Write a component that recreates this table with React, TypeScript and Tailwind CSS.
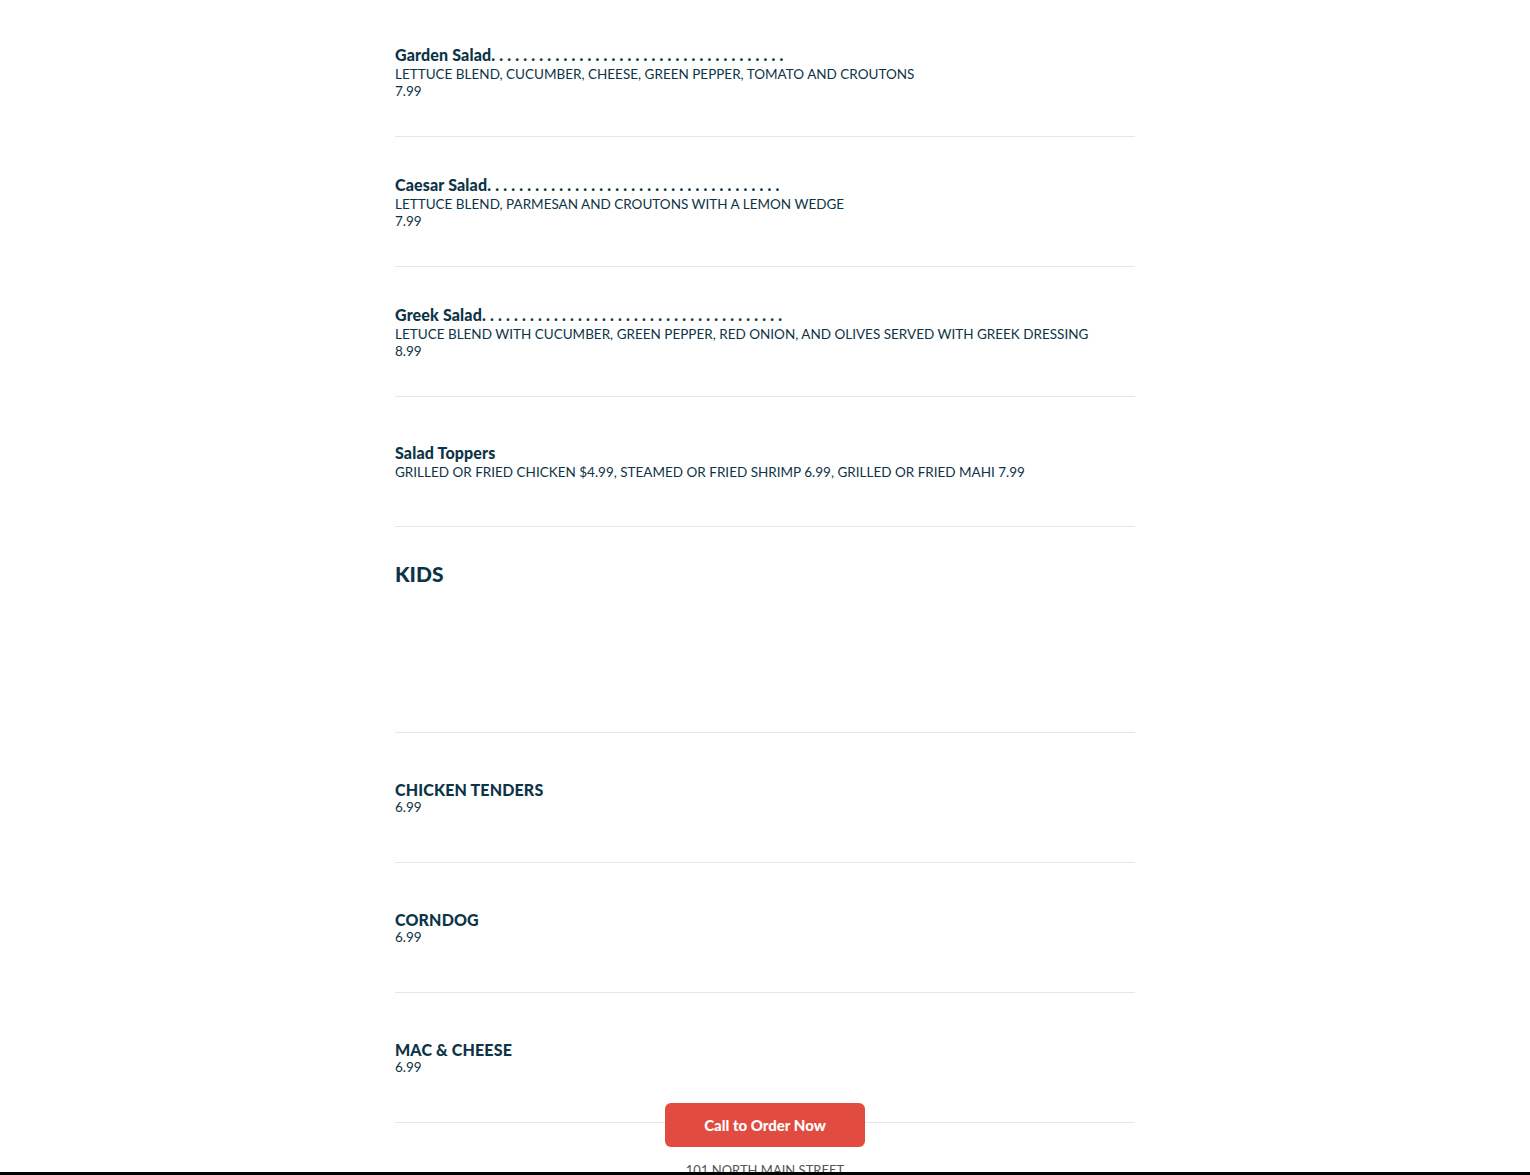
import React from "react";

type Item = { name: string; dots?: number; desc?: string; price?: string };

const salads: Item[] = [
  {
    name: "Garden Salad",
    dots: 37,
    desc: "LETTUCE BLEND, CUCUMBER, CHEESE, GREEN PEPPER, TOMATO AND CROUTONS",
    price: "7.99",
  },
  {
    name: "Caesar Salad",
    dots: 37,
    desc: "LETTUCE BLEND, PARMESAN AND CROUTONS WITH A LEMON WEDGE",
    price: "7.99",
  },
  {
    name: "Greek Salad",
    dots: 38,
    desc: "LETUCE BLEND WITH CUCUMBER, GREEN PEPPER, RED ONION, AND OLIVES SERVED WITH GREEK DRESSING",
    price: "8.99",
  },
  {
    name: "Salad Toppers",
    desc: "GRILLED OR FRIED CHICKEN $4.99, STEAMED OR FRIED SHRIMP 6.99, GRILLED OR FRIED MAHI 7.99",
  },
];

const kids: Item[] = [
  { name: "CHICKEN TENDERS", price: "6.99" },
  { name: "CORNDOG", price: "6.99" },
  { name: "MAC & CHEESE", price: "6.99" },
];

function MenuItem({ item }: { item: Item }) {
  return (
    <div className="min-h-[130px] flex flex-col justify-center border-b border-[#e6e6e6] pt-[2px]">
      <h3 className="text-[16px] leading-[18px] font-black whitespace-nowrap">
        <span className="tracking-[0.15px]">{item.name}</span>
        {item.dots ? (
          <span className="tracking-[0.2px]">{Array(item.dots).fill(".").join(" ")}</span>
        ) : null}
      </h3>
      {item.desc && <p className="text-[13.5px] leading-[17px] mt-[2px]">{item.desc}</p>}
      {item.price && <p className="text-[13.5px] leading-[17px]">{item.price}</p>}
    </div>
  );
}

export default function App() {
  return (
    <div
      className="min-h-screen bg-white text-[#0d3446] relative"
      style={{ fontFamily: "Lato, 'Liberation Sans', sans-serif" }}
    >
      <main className="w-[740px] mx-auto pt-[7px] pb-[40px]">
        {salads.map((s) => (
          <MenuItem key={s.name} item={s} />
        ))}

        {/* Kids section */}
        <section className="h-[206px] border-b border-[#e6e6e6] pt-[35px]">
          <h2 className="text-[21px] leading-[24px] font-black">KIDS</h2>
        </section>

        {kids.map((k) => (
          <MenuItem key={k.name} item={k} />
        ))}

        <p className="text-center text-[13px] text-[#555] mt-[38px]">101 NORTH MAIN STREET</p>
      </main>

      <a
        href="#"
        className="fixed left-1/2 -translate-x-1/2 top-[1103px] w-[200px] h-[44px] rounded-md bg-[#e14b40] text-white text-[15px] font-black flex items-center justify-center"
      >
        Call to Order Now
      </a>
      <div className="fixed left-0 right-0 top-[1172px] h-[10px] bg-black" />
    </div>
  );
}
